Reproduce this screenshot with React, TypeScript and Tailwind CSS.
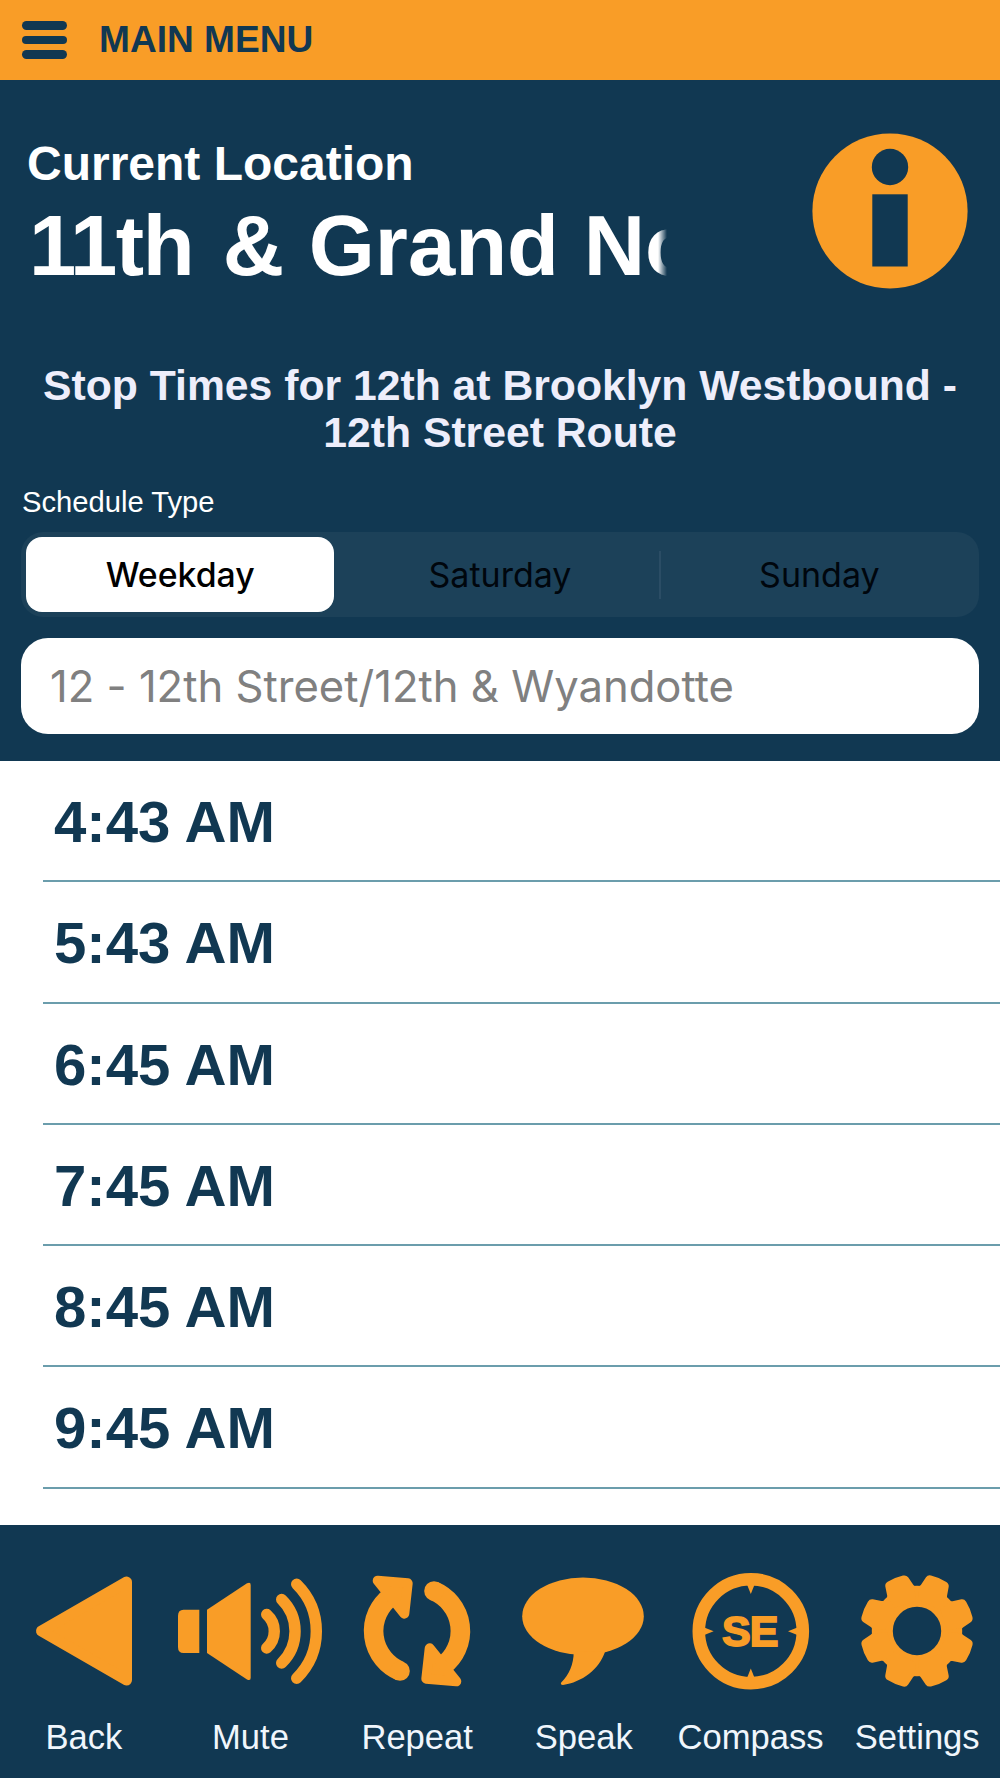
import type { ReactNode } from 'react';

const TOOTH_ANGLES = [0, 45, 90, 135, 180, 225, 270, 315];

const BackIcon = () => (
  <path
    d="M33.5 66 L118.5 17 V115 Z"
    fill="currentColor"
    stroke="currentColor"
    strokeWidth="11"
    strokeLinejoin="round"
  />
);

const MuteIcon = () => (
  <>
    <path d="M24.3 44.7 V88 H8.5 Q3 88 3 82 V50.7 Q3 44.7 8.5 44.7 Z" fill="currentColor" />
    <path d="M32 44.7 L72 18.3 Q75.7 16.5 75.7 20 V112.7 Q75.7 116.2 72 114.4 L32 88 Z" fill="currentColor" />
    <g fill="none" stroke="currentColor" strokeWidth="11.4" strokeLinecap="round">
      <path d="M91.7 49.5 A22.3 22.3 0 0 1 91.7 83" />
      <path d="M106.7 34.5 A44.4 44.4 0 0 1 106.7 98" />
      <path d="M121.7 19.3 A66 66 0 0 1 121.7 113.2" />
    </g>
  </>
);

const RepeatArrow = () => (
  <>
    <path d="M92 26 A43.4 43.4 0 0 1 101.5 100.3" fill="none" stroke="currentColor" strokeWidth="19.6" />
    <circle cx="92" cy="26" r="9.8" fill="currentColor" />
    <path
      d="M87.7 83.3 L84.3 113.7 L114.3 116.3 Z"
      fill="currentColor"
      stroke="currentColor"
      strokeWidth="10"
      strokeLinejoin="round"
    />
  </>
);

const RepeatIcon = () => (
  <>
    <RepeatArrow />
    <g transform="rotate(180 75 66)">
      <RepeatArrow />
    </g>
  </>
);

const SpeakIcon = () => (
  <g fill="currentColor">
    <ellipse cx="75" cy="51.2" rx="60.8" ry="38.7" />
    <path d="M65.7 87 C65.7 99 61 110 53.2 117.5 Q52 119.8 55 120 C74 117 91 105 97.3 86 Z" />
  </g>
);

const CompassIcon = () => (
  <>
    <circle cx="75.8" cy="66.2" r="52" fill="none" stroke="currentColor" strokeWidth="12.6" />
    {[0, 90, 180, 270].map((angle) => (
      <path key={angle} d="M71.8 19 L75.8 29 L79.8 19 Z" fill="currentColor" transform={`rotate(${angle} 75.8 66.2)`} />
    ))}
    <text
      x="75.3"
      y="80.8"
      textAnchor="middle"
      textLength="56.5"
      fontSize="43"
      fill="currentColor"
      stroke="currentColor"
      strokeWidth="1.8"
      className="font-bold"
    >
      SE
    </text>
  </>
);

const SettingsIcon = () => (
  <>
    <circle cx="75" cy="66" r="34.7" fill="none" stroke="currentColor" strokeWidth="21" />
    {TOOTH_ANGLES.map((angle) => (
      <path
        key={angle}
        d="M77.5 21 Q78.3 20.8 79 19.8 L84 12.2 Q85.7 9.8 89 10.5 Q97.3 12.5 104.3 16.9 Q107.2 18.7 106.7 21.8 L105.1 30.6 Q104.9 31.8 105 32.5 L95 44 L76 34 Z"
        fill="currentColor"
        transform={`rotate(${angle} 75 66)`}
      />
    ))}
  </>
);

const Toolbar = () => {
  const items: { label: string; icon: ReactNode }[] = [
    { label: 'Back', icon: <BackIcon /> },
    { label: 'Mute', icon: <MuteIcon /> },
    { label: 'Repeat', icon: <RepeatIcon /> },
    { label: 'Speak', icon: <SpeakIcon /> },
    { label: 'Compass', icon: <CompassIcon /> },
    { label: 'Settings', icon: <SettingsIcon /> }
  ];

  return (
    <nav className="grid h-[253px] grid-cols-6 bg-[#113852] pt-10">
      {items.map((item) => (
        <button key={item.label} className="flex flex-col items-center">
          <svg width="150" height="130" viewBox="0 0 150 130" className="text-[#f99d27]">
            {item.icon}
          </svg>
          <span className="mt-[22px] pl-px text-[34.6px] leading-10 text-[#f0f6fc]">{item.label}</span>
        </button>
      ))}
    </nav>
  );
};

const ScheduleTabs = () => (
  <div className="mx-[21px] mt-3.5 grid h-[85px] grid-cols-3 rounded-[22px] bg-[#1c4159] font-['Inter',sans-serif] text-[34px] text-[#00060d]">
    <button className="my-[5px] mr-1.5 ml-[5px] rounded-[16px] bg-white pt-px text-[33.8px] font-medium text-black">
      Weekday
    </button>
    <button>Saturday</button>
    <button className="relative">
      <span className="absolute top-[19px] -left-px h-12 w-0.5 bg-[#2b4d65]" />
      Sunday
    </button>
  </div>
);

const App = () => {
  const times = ['4:43 AM', '5:43 AM', '6:45 AM', '7:45 AM', '8:45 AM', '9:45 AM'];

  return (
    <div className="flex h-[1778px] w-[1000px] flex-col overflow-hidden bg-white font-['Liberation_Sans',Arial,sans-serif]">
      <header className="flex h-20 items-center bg-[#f99d27] pl-[21.5px] text-[#113852]">
        <div className="flex w-[45.5px] flex-col gap-1.5">
          <span className="h-[8.5px] rounded-full bg-[#113852]" />
          <span className="h-[8.5px] rounded-full bg-[#113852]" />
          <span className="h-[8.5px] rounded-full bg-[#113852]" />
        </div>
        <h1 className="ml-8 text-[37.1px] font-bold">MAIN MENU</h1>
      </header>

      <section className="h-[681px] bg-[#113852] text-white">
        <div className="flex h-[282px] justify-between">
          <div className="pt-[60px] pl-[27px] font-bold">
            <p className="text-[48px] leading-[48px]">Current Location</p>
            {/* Long stop names fade out at the right edge */}
            <p className="mt-2.5 w-[640px] overflow-hidden pl-0.5 text-[85px] leading-[96px] [word-spacing:1px] whitespace-nowrap [mask-image:linear-gradient(to_right,black_calc(100%-9px),transparent)]">
              <span className="mr-[5px] tracking-[-1.5px]">11th</span> & Grand Northbound
            </p>
          </div>
          <svg width="156" height="156" viewBox="0 0 156 156" className="mt-[52.5px] mr-8 shrink-0">
            <circle cx="78" cy="78" r="77.6" fill="#f99d27" />
            <circle cx="78" cy="34" r="18.2" fill="#113852" />
            <rect x="60.3" y="61.3" width="35.4" height="72.2" fill="#113852" />
          </svg>
        </div>

        <h2 className="text-center text-[42.7px] leading-[46.5px] font-bold text-[#eeeefb]">
          Stop Times for 12th at Brooklyn Westbound -<br />
          12th Street Route
        </h2>
        <p className="mt-[31px] ml-[22px] text-[29.2px] leading-8">Schedule Type</p>
        <ScheduleTabs />
        <div className="mx-[21px] mt-[21px] flex h-[96px] items-center rounded-[27px] bg-white pt-0.5 pl-[29px] font-['Inter',sans-serif] text-[43.6px] text-[#808080] [font-feature-settings:'calt'_0]">
          12 - 12th Street/12th & Wyandotte
        </div>
      </section>

      <ul className="h-[764px] pl-[43px]">
        {times.map((time) => (
          <li
            key={time}
            className="flex h-[121.3px] items-center border-b-2 border-[#6b9dac] pt-0.5 pl-[11px] text-[58.2px] font-bold text-[#113852]"
          >
            {time}
          </li>
        ))}
      </ul>

      <Toolbar />
    </div>
  );
};

export default App;
